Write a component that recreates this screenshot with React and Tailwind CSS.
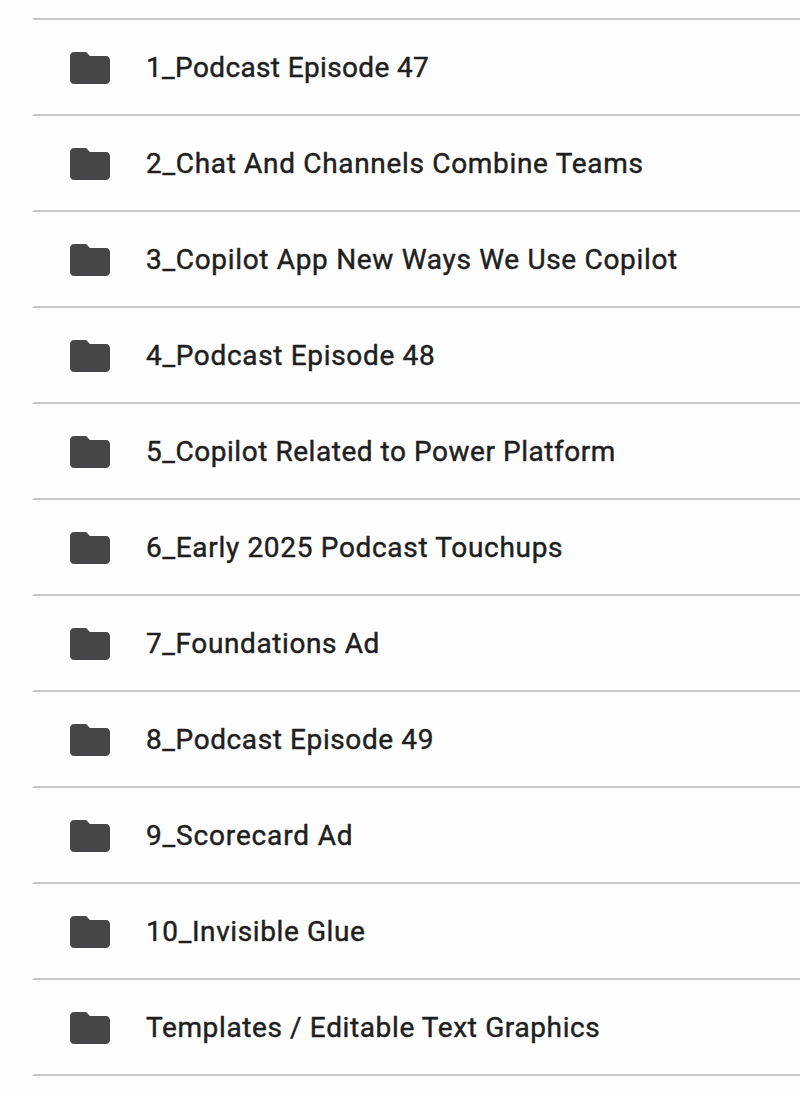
const folders = [
  { name: '1_Podcast Episode 47', spacing: 'tracking-[0.36px]' },
  { name: '2_Chat And Channels Combine Teams', spacing: 'tracking-[0.68px]' },
  { name: '3_Copilot App New Ways We Use Copilot', spacing: 'tracking-[0.68px]' },
  { name: '4_Podcast Episode 48', spacing: 'tracking-[0.67px]' },
  { name: '5_Copilot Related to Power Platform', spacing: 'tracking-[0.54px]' },
  { name: '6_Early 2025 Podcast Touchups', spacing: 'tracking-[0.68px]' },
  { name: '7_Foundations Ad', spacing: 'tracking-[0.6px]' },
  { name: '8_Podcast Episode 49', spacing: 'tracking-[0.6px]' },
  { name: '9_Scorecard Ad', spacing: 'tracking-[0.84px]' },
  { name: '10_Invisible Glue', spacing: 'tracking-[0.6px]' },
  { name: 'Templates / Editable Text Graphics', spacing: 'tracking-[0.62px]' },
];

function FolderIcon() {
  return (
    <svg viewBox="0 0 24 24" className="w-12 h-12 shrink-0 fill-[#464648]" aria-hidden="true">
      <path d="M10 4H4c-1.1 0-2 .9-2 2v12c0 1.1.9 2 2 2h16c1.1 0 2-.9 2-2V8c0-1.1-.9-2-2-2h-8l-2-2z" />
    </svg>
  );
}

export default function App() {
  return (
    <div className="h-[1096px] overflow-hidden bg-[#fefefe] pt-[18px] pl-8 font-['Roboto',sans-serif]">
      <ul className="border-t-2 border-l-2 border-t-[#c7c7c7] border-l-transparent">
        {folders.map((folder) => (
          <li
            key={folder.name}
            className="flex h-24 -ml-[2px] items-center gap-8 border-b-2 border-l-2 border-b-[#c7c7c7] border-l-transparent pt-[2px] pl-8"
          >
            <FolderIcon />
            <span className={`whitespace-nowrap text-[28px] leading-10 font-normal text-[#1f1f1f] [-webkit-text-stroke:0.45px_#1f1f1f] ${folder.spacing}`}>
              {folder.name}
            </span>
          </li>
        ))}
      </ul>
    </div>
  );
}
